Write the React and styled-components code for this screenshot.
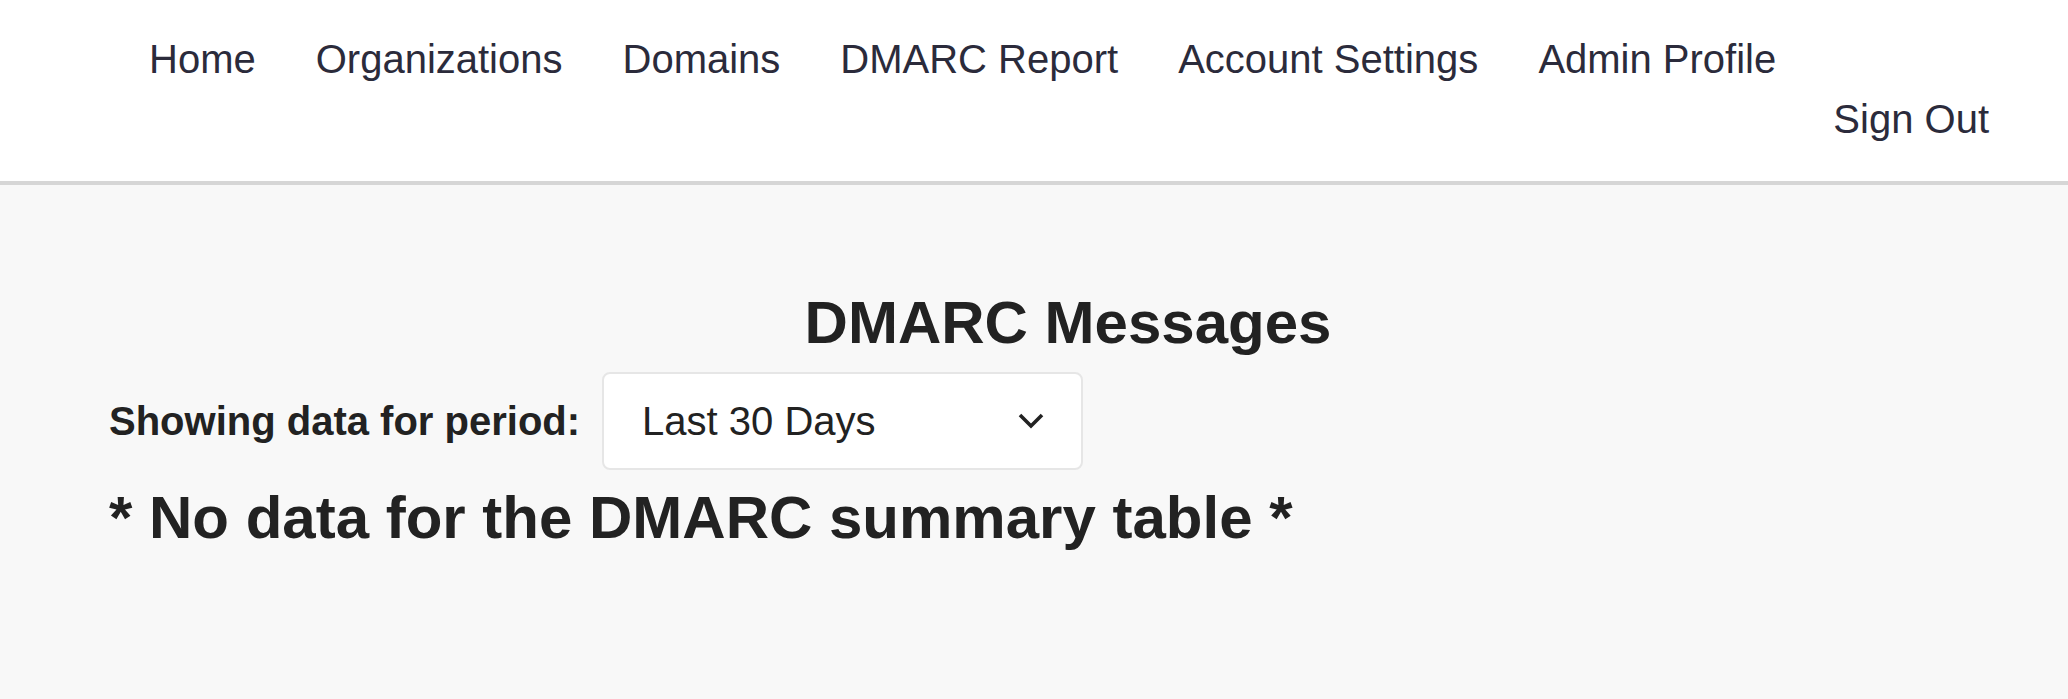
import React from 'react';
import styled, { createGlobalStyle } from 'styled-components';

const GlobalStyle = createGlobalStyle`
    html, body {
        margin: 0;
        padding: 0;
        background: #f8f8f8;
        font-family: "Liberation Sans", Arial, sans-serif;
    }
`

const Header = styled.header`
    background: #ffffff;
    padding: 29px 49px 32px 119px;
    border-bottom: 4px solid #d6d6d6;
    line-height: 60px;
    font-size: 40px;
    color: #2b2b3b;
`
const NavRow = styled.nav`
    display: flex;
    justify-content: ${props => (props.end ? 'flex-end' : 'flex-start')};
`
const NavLink = styled.a`
    text-decoration: none;
    color: inherit;
    padding: 0 30px;
    white-space: nowrap;
    cursor: pointer;
`

const Main = styled.main`
    padding: 102px 41px 120px 109px;
    color: #222222;
`
const Title = styled.h1`
    margin: 0;
    text-align: center;
    font-size: 60px;
    line-height: 72px;
    font-weight: bold;
`
const PeriodRow = styled.div`
    display: flex;
    align-items: center;
    gap: 22px;
    margin-top: 13px;
`
const Label = styled.span`
    font-size: 40px;
    font-weight: bold;
`
const Select = styled.div`
    box-sizing: border-box;
    width: 481px;
    height: 98px;
    display: flex;
    align-items: center;
    justify-content: space-between;
    padding: 0 37px 0 38px;
    background: #ffffff;
    border: 2px solid #e6e6e6;
    border-radius: 8px;
    font-size: 40px;
    color: #222222;
`
const Empty = styled.h2`
    margin: 12px 0 0;
    font-size: 60px;
    line-height: 72px;
    font-weight: bold;
`

const Chevron = () => (
    <svg width="26" height="16" viewBox="0 0 26 16">
        <polyline points="2,2 13,13 24,2" fill="none" stroke="#222" strokeWidth="3.6" />
    </svg>
)

const links = ['Home', 'Organizations', 'Domains', 'DMARC Report', 'Account Settings', 'Admin Profile']

export default function App() {
    return (
        <>
            <GlobalStyle />
            <Header>
                <NavRow>
                    {links.map(l => <NavLink key={l} href="#">{l}</NavLink>)}
                </NavRow>
                <NavRow end>
                    <NavLink href="#">Sign Out</NavLink>
                </NavRow>
            </Header>
            <Main>
                <Title>DMARC Messages</Title>
                <PeriodRow>
                    <Label>Showing data for period:</Label>
                    <Select>
                        <span>Last 30 Days</span>
                        <Chevron />
                    </Select>
                </PeriodRow>
                <Empty>* No data for the DMARC summary table *</Empty>
            </Main>
        </>
    )
}
